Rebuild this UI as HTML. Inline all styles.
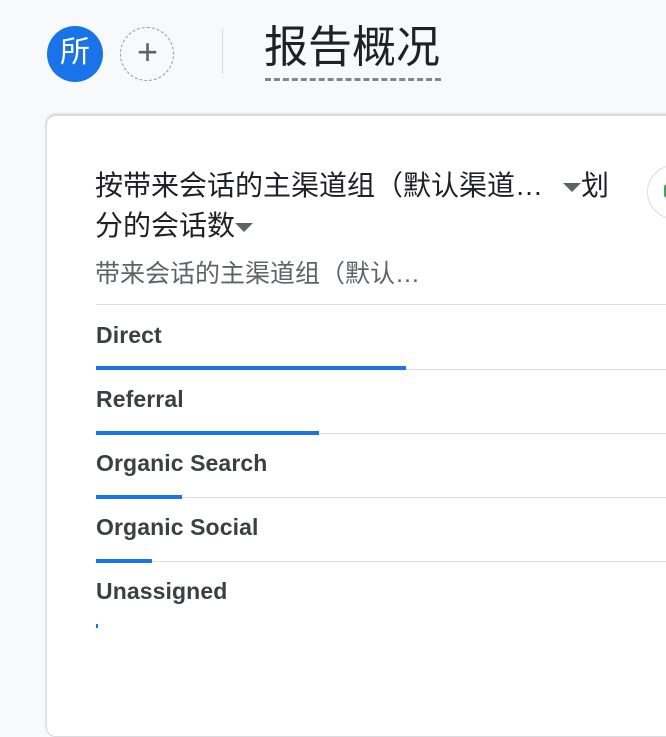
<!DOCTYPE html><html><head><meta charset="utf-8"><style>
body{margin:0;width:666px;height:704px;overflow:hidden;background:#f8f9fa;font-family:"Liberation Sans","WenQuanYi Zen Hei",sans-serif;position:relative}
.a{position:absolute}
.card{position:absolute;left:46px;top:115px;width:640px;height:620px;background:#fff;border:1px solid #dadce0;border-radius:10px;box-shadow:0 -1px 2px rgba(60,64,67,.25)}
.lbl{position:absolute;left:96px;font-size:23px;color:#3c4043;font-weight:bold;letter-spacing:.1px}
.sep{position:absolute;left:96px;width:580px;height:1px;background:#dadce0}
.bar{position:absolute;left:96px;height:4px;background:#1a73e8}
.tri{display:inline-block;width:0;height:0;border-left:9px solid transparent;border-right:9px solid transparent;border-top:9px solid #5f6368;vertical-align:middle}
</style></head><body>
<div class="a" style="left:47px;top:26px;width:56px;height:56px;border-radius:50%;background:#1a73e8;color:#fff;font-size:30px;line-height:54px;text-align:center">所</div>
<div class="a" style="left:120px;top:27px;width:52px;height:52px;border-radius:50%;border:1.5px dashed #999"></div>
<div class="a" style="left:120px;top:26px;width:55px;height:55px;line-height:52px;text-align:center;font-size:36px;color:#5f6368;font-weight:300">+</div>
<div class="a" style="left:222px;top:28px;width:1px;height:46px;background:#dadce0"></div>
<div class="a" style="left:264px;top:20px;font-size:44px;color:#202124;line-height:56px">报告概况</div>
<div class="a" style="left:265px;top:78px;width:176px;border-top:3px dashed #80868b"></div>
<div class="card"></div>
<div class="a" style="left:647px;top:165px;width:52px;height:52px;border-radius:50%;border:1.5px solid #dadce0;background:#fff"></div>
<div class="a" style="left:664px;top:184px;width:6px;height:14px;border-radius:3px;background:#34a853"></div>
<div class="a" style="left:95px;top:166px;font-size:28px;color:#202124;line-height:40px;width:560px;white-space:nowrap">按带来会话的主渠道组（默认渠道…<span style="display:inline-block;width:20px"></span><span class="tri"></span>划<br>分的会话数<span class="tri"></span></div>
<div class="a" style="left:95px;top:258px;font-size:25px;color:#5f6368;line-height:32px;white-space:nowrap">带来会话的主渠道组（默认…</div>
<div class="sep" style="top:304px"></div>
<div class="lbl" style="top:322px">Direct</div><div class="sep" style="top:369px"></div><div class="bar" style="top:366px;width:310px"></div>
<div class="lbl" style="top:386px">Referral</div><div class="sep" style="top:433px"></div><div class="bar" style="top:431px;width:223px"></div>
<div class="lbl" style="top:450px">Organic Search</div><div class="sep" style="top:497px"></div><div class="bar" style="top:495px;width:86px"></div>
<div class="lbl" style="top:514px">Organic Social</div><div class="sep" style="top:561px"></div><div class="bar" style="top:559px;width:56px"></div>
<div class="lbl" style="top:578px">Unassigned</div><div class="bar" style="top:624px;width:2px"></div>
</body></html>
